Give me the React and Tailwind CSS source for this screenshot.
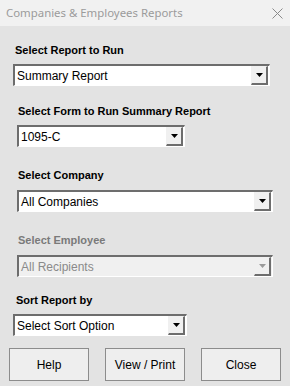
import React from "react";

function Arrow({ disabled }) {
  return (
    <div className="w-[17px] h-full bg-[#f0f0f0] border-l border-t border-l-[#f0f0f0] border-t-[#f0f0f0] border-r-2 border-b-2 border-r-[#6d6d6d] border-b-[#6d6d6d] flex items-center justify-center">
      <svg width="7" height="4" viewBox="0 0 7 4">
        <polygon points="0,0 7,0 3.5,4" fill={disabled ? "#9a9a9a" : "#000"} />
      </svg>
    </div>
  );
}

function Dropdown({ text, width, ml, disabled }) {
  return (
    <div
      className={`h-[22px] ${width} ${ml} border-t-2 border-l-2 border-t-[#6d6d6d] border-l-[#6d6d6d] border-b border-r border-b-white border-r-white ${disabled ? "bg-[#f0f0f0]" : "bg-white"} flex items-stretch`}
    >
      <div
        className={`flex-1 flex items-center pl-[2px] text-[12px] ${disabled ? "text-[#8a8a8a]" : "text-black"}`}
      >
        {text}
      </div>
      <div className="py-0 pr-[1px]">
        <Arrow disabled={disabled} />
      </div>
    </div>
  );
}

function Label({ children, mt, ml, disabled }) {
  return (
    <div
      className={`${mt} ${ml} h-[13px] leading-[13px] text-[11px] font-bold ${disabled ? "text-[#7a7a7a]" : "text-black"}`}
    >
      {children}
    </div>
  );
}

function Btn({ children }) {
  return (
    <div className="w-[80px] h-[33px] bg-[#eeeeee] border border-[#8c8c8c] flex items-center justify-center text-[12px] text-black">
      {children}
    </div>
  );
}

export default function App() {
  return (
    <div
      className="w-[290px] h-[386px] bg-[#e3e3e3] flex flex-col overflow-hidden"
      style={{ fontFamily: '"Liberation Sans", Arial, sans-serif' }}
    >
      <div className="h-[26px] bg-[#f1f1f1] flex items-center justify-between pl-[6px] pr-[6px] shrink-0">
        <span
          className="text-[11.4px] text-[#9b9b9b]"
          style={{ fontFamily: '"Noto Sans", "Open Sans", sans-serif' }}
        >
          Companies &amp; Employees Reports
        </span>
        <svg width="11" height="11" viewBox="0 0 11 11" className="mr-[1px]">
          <path d="M0.5 0.5 L10.5 10.5 M10.5 0.5 L0.5 10.5" stroke="#8a8a8a" strokeWidth="1" />
        </svg>
      </div>

      <Label mt="mt-[18px]" ml="ml-[15px]">Select Report to Run</Label>
      <div className="mt-[7px]">
        <Dropdown text="Summary Report" width="w-[257px]" ml="ml-[13px]" />
      </div>

      <Label mt="mt-[19px]" ml="ml-[18px]">Select Form to Run Summary Report</Label>
      <div className="mt-[7px]">
        <Dropdown text="1095-C" width="w-[168px]" ml="ml-[17px]" />
      </div>

      <Label mt="mt-[22px]" ml="ml-[18px]">Select Company</Label>
      <div className="mt-[8px]">
        <Dropdown text="All Companies" width="w-[256px]" ml="ml-[17px]" />
      </div>

      <Label mt="mt-[22px]" ml="ml-[18px]" disabled>Select Employee</Label>
      <div className="mt-[8px]">
        <Dropdown text="All Recipients" width="w-[256px]" ml="ml-[17px]" disabled />
      </div>

      <Label mt="mt-[17px]" ml="ml-[16px]">Sort Report by</Label>
      <div className="mt-[7px]">
        <Dropdown text="Select Sort Option" width="w-[174px]" ml="ml-[13px]" />
      </div>

      <div className="mt-[12px] flex gap-[16px] ml-[9px]">
        <Btn>Help</Btn>
        <Btn>View / Print</Btn>
        <Btn>Close</Btn>
      </div>
    </div>
  );
}
